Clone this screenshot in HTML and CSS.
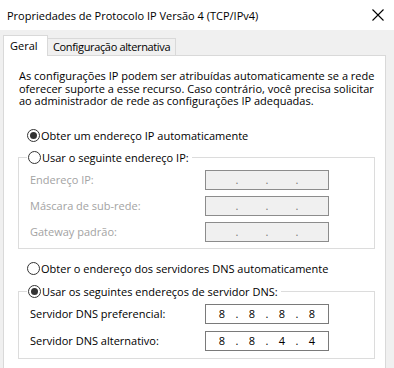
FILE: index.html
```html
<!DOCTYPE html>
<html lang="pt">
<head>
    <meta charset="UTF-8">
    <meta name="viewport" content="width=device-width, initial-scale=1.0">
    <title>Propriedades de Protocolo IP Versão 4 (TCP/IPv4)</title>
    <link rel="stylesheet" href="styles.css">
</head>
<body>

    <div class="titlebar">
        <span class="title">Propriedades de Protocolo IP Versão 4 (TCP/IPv4)</span>
        <svg class="close" width="12" height="12" viewBox="0 0 12 12">
            <path d="M0.5 0.5 L11.5 11.5 M11.5 0.5 L0.5 11.5" stroke="#000" stroke-width="1.1" fill="none"/>
        </svg>
    </div>

    <div class="dialog">
        <div class="tabs">
            <div class="tab tab-active">Geral</div>
            <div class="tab tab-alt">Configuração alternativa</div>
        </div>

        <div class="panel">
            <p class="intro">
                As configurações IP podem ser atribuídas automaticamente se a rede<br>
                oferecer suporte a esse recurso. Caso contrário, você precisa solicitar<br>
                ao administrador de rede as configurações IP adequadas.
            </p>

            <div class="option option-first">
                <span class="radio checked"></span>Obter um endereço IP automaticamente
            </div>

            <fieldset class="group group-ip">
                <legend class="option">
                    <span class="radio"></span>Usar o seguinte endereço IP:
                </legend>
                <div class="field">
                    <span class="label disabled">Endereço IP:</span>
                    <div class="ip ip-disabled">
                        <span class="oct"></span><span class="dot">.</span><span class="oct"></span><span class="dot">.</span><span class="oct"></span><span class="dot">.</span><span class="oct"></span>
                    </div>
                </div>
                <div class="field">
                    <span class="label disabled">Máscara de sub-rede:</span>
                    <div class="ip ip-disabled">
                        <span class="oct"></span><span class="dot">.</span><span class="oct"></span><span class="dot">.</span><span class="oct"></span><span class="dot">.</span><span class="oct"></span>
                    </div>
                </div>
                <div class="field">
                    <span class="label disabled">Gateway padrão:</span>
                    <div class="ip ip-disabled">
                        <span class="oct"></span><span class="dot">.</span><span class="oct"></span><span class="dot">.</span><span class="oct"></span><span class="dot">.</span><span class="oct"></span>
                    </div>
                </div>
            </fieldset>

            <div class="option option-dns">
                <span class="radio"></span>Obter o endereço dos servidores DNS automaticamente
            </div>

            <fieldset class="group group-dns">
                <legend class="option">
                    <span class="radio checked"></span>Usar os seguintes endereços de servidor DNS:
                </legend>
                <div class="field">
                    <span class="label">Servidor DNS preferencial:</span>
                    <div class="ip">
                        <span class="oct">8</span><span class="dot">.</span><span class="oct">8</span><span class="dot">.</span><span class="oct">8</span><span class="dot">.</span><span class="oct">8</span>
                    </div>
                </div>
                <div class="field">
                    <span class="label">Servidor DNS alternativo:</span>
                    <div class="ip">
                        <span class="oct">8</span><span class="dot">.</span><span class="oct">8</span><span class="dot">.</span><span class="oct">4</span><span class="dot">.</span><span class="oct">4</span>
                    </div>
                </div>
            </fieldset>
        </div>
    </div>

</body>
</html>
```

FILE: styles.css
```css
html,body{
    margin: 0;
    padding: 0;
    width: 394px;
    height: 368px;
    overflow: hidden;
}
body{
    font-family: "Open Sans", "Noto Sans", sans-serif;
    font-size: 11px;
    color: #000;
    background-color: #f0f0f0;
}
.titlebar{
    height: 30px;
    display: flex;
    align-items: center;
    justify-content: space-between;
    padding: 0 10px 0 7px;
    background-color: #fff;
    font-size: 11px;
}
.close{
    display: block;
}
.dialog{
    padding-left: 3px;
}
.tabs{
    display: flex;
    align-items: flex-end;
    height: 20px;
    padding-top: 5px;
}
.tab{
    box-sizing: border-box;
    height: 17px;
    line-height: 15px;
    padding: 0 5px;
    border: 1px solid #d9d9d9;
    border-bottom: 0;
    border-left: 0;
    background-color: #f0f0f0;
}
.tab-alt{
    width: 128px;
    letter-spacing: -0.35px;
    white-space: nowrap;
}
.tab-active{
    position: relative;
    z-index: 1;
    width: 45px;
    height: 21px;
    line-height: 19px;
    margin-bottom: -1px;
    padding-left: 6px;
    border-left: 1px solid #d9d9d9;
    background-color: #fff;
}
.panel{
    box-sizing: border-box;
    width: 383px;
    height: 320px;
    border: 1px solid #d9d9d9;
    background-color: #fff;
    padding-top: 14px;
}
.intro{
    margin: 0 0 0 15px;
    line-height: 12.6px;
}
.option{
    display: flex;
    align-items: center;
    height: 16px;
    line-height: 16px;
    white-space: nowrap;
}
.option-first{
    margin: 20px 0 0 23px;
}
.option-dns{
    margin: 12px 0 0 23px;
}
.radio{
    box-sizing: border-box;
    width: 13px;
    height: 13px;
    margin-right: 1px;
    border: 1px solid #333;
    border-radius: 50%;
    display: flex;
    align-items: center;
    justify-content: center;
}
.radio.checked::after{
    content: "";
    width: 7px;
    height: 7px;
    border-radius: 50%;
    background-color: #333;
}
.group{
    margin: 0 10px 0 14px;
    padding: 3px 0 6px 11px;
    border: 1px solid #dcdcdc;
    min-width: 0;
}
.group legend{
    height: 18px;
    padding: 0 3px 0 1px;
    margin-left: -3px;
}
.group-ip{
    margin-top: 5px;
}
.group-dns{
    margin-top: 6px;
    padding-bottom: 7px;
}
.field{
    display: flex;
    align-items: center;
    height: 20px;
    margin-top: 6px;
}
.group-dns .field + .field{
    margin-top: 7px;
}
.group .field:first-of-type{
    margin-top: 0;
}
.label{
    width: 175px;
}
.disabled{
    color: #a3a3a3;
}
.ip{
    box-sizing: border-box;
    width: 124px;
    height: 20px;
    display: flex;
    align-items: center;
    padding-left: 3px;
    border: 1px solid #7a7a7a;
    background-color: #fff;
}
.ip-disabled{
    border-color: #8c8c8c;
    background-color: #f0f0f0;
    color: #777;
}
.oct{
    width: 26px;
    text-align: center;
}
.dot{
    width: 4px;
    text-align: center;
}
```
